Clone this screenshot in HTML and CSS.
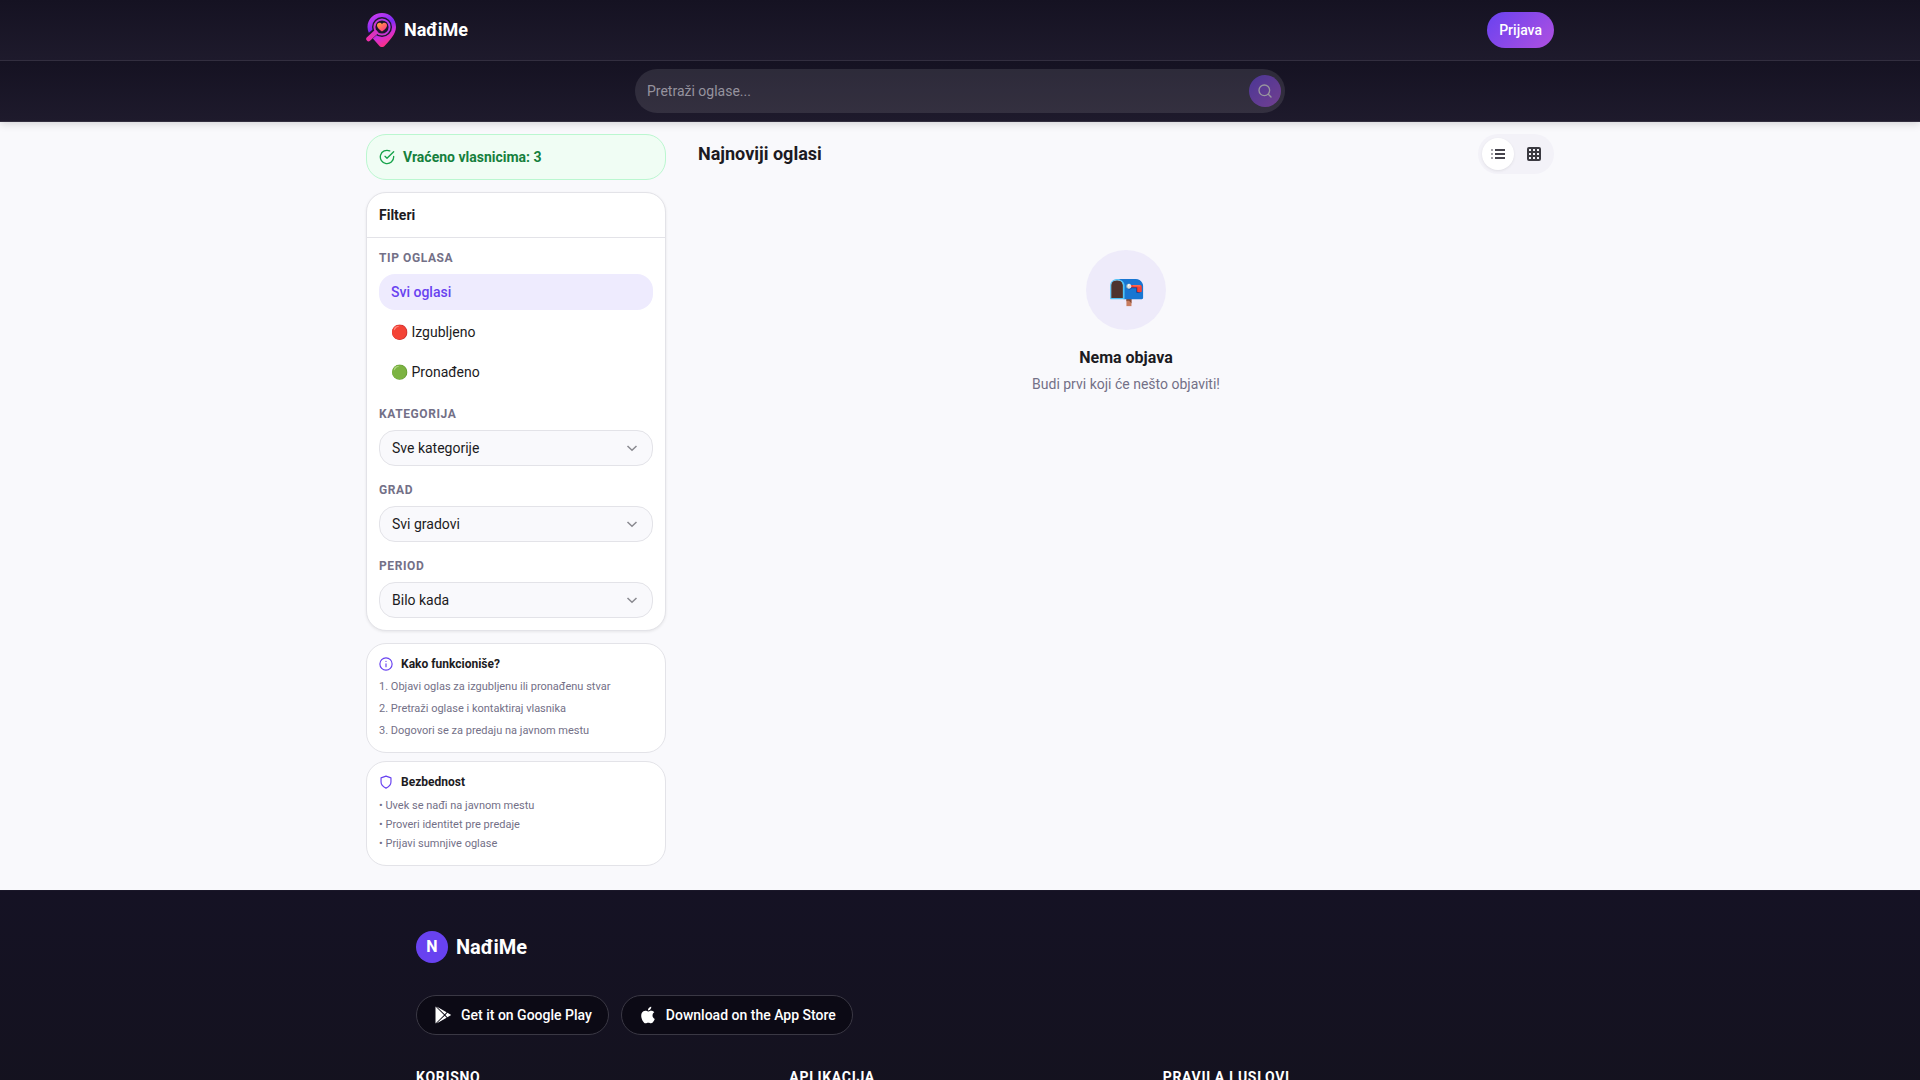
FILE: index.html
```
<!DOCTYPE html>
<html lang="sr-Latn">
<head>
  <meta charset="UTF-8">
  <meta name="viewport" content="width=device-width, initial-scale=1">
  <title>NađiMe</title>
  <link rel="stylesheet" href="styles.css">
</head>
<body>

  <header class="header">
    <div class="topbar">
      <div class="container topbar-inner">
        <a href="#" class="brand">
          <svg class="brand-logo" width="32" height="36" viewBox="0 0 32 36" fill="none">
            <defs>
              <linearGradient id="pin" x1="4" y1="2" x2="20" y2="34" gradientUnits="userSpaceOnUse">
                <stop offset="0" stop-color="#d63cf0"/>
                <stop offset="0.45" stop-color="#7a2bf5"/>
                <stop offset="0.7" stop-color="#d02fd8"/>
                <stop offset="1" stop-color="#ff2f7d"/>
              </linearGradient>
              <linearGradient id="lens" x1="0" y1="28" x2="24" y2="8" gradientUnits="userSpaceOnUse">
                <stop offset="0" stop-color="#f22fa5"/>
                <stop offset="1" stop-color="#a83af5"/>
              </linearGradient>
              <linearGradient id="heart" x1="12" y1="10" x2="19" y2="19" gradientUnits="userSpaceOnUse">
                <stop offset="0" stop-color="#ffb02e"/>
                <stop offset="1" stop-color="#ff2f8d"/>
              </linearGradient>
            </defs>
            <path d="M16 1C8 1 1.500 7 1.500 15c0 4 2 7.500 4.500 10.500l7 8c1.700 2 4.300 2 6 0C24 28 30 22 30 15 30 7 24 1 16 1z" fill="url(#pin)"/>
            <circle cx="16" cy="15" r="10" fill="#1b172b"/>
            <path d="M0 28L9 20" stroke="#1b172b" stroke-width="7"/>
            <path d="M2.500 27L9.500 20.500" stroke="url(#lens)" stroke-width="4.500" stroke-linecap="round"/>
            <circle cx="16" cy="15" r="7.600" stroke="url(#lens)" stroke-width="2"/>
            <path d="M16 19.500c-3-2.200-5-3.800-5-6 0-3 3.600-3.600 5-1.300 1.400-2.300 5-1.700 5 1.300 0 2.200-2 3.800-5 6z" fill="url(#heart)"/>
          </svg>
          <span>NađiMe</span>
        </a>
        <button type="button" class="login-btn">Prijava</button>
      </div>
    </div>
    <div class="searchbar">
      <form class="search" role="search">
        <input type="text" class="search-input" placeholder="Pretraži oglase..." aria-label="Pretraži oglase">
        <button type="submit" class="search-btn" aria-label="Pretraži" disabled>
          <svg width="16" height="16" viewBox="0 0 24 24" fill="none" stroke="currentColor" stroke-width="2">
            <circle cx="11" cy="11" r="8"/>
            <path d="M21 21l-4-4" stroke-linecap="round"/>
          </svg>
        </button>
      </form>
    </div>
  </header>

  <div class="container page">
    <aside class="sidebar">
      <div class="returned">
        <svg width="16" height="16" viewBox="0 0 24 24" fill="none" stroke="currentColor" stroke-width="2" stroke-linecap="round" stroke-linejoin="round">
          <path d="M22 11.080V12a10 10 0 1 1-5.930-9.140"/>
          <path d="M22 4L12 14.010l-3-3"/>
        </svg>
        <span>Vraćeno vlasnicima: 3</span>
      </div>

      <section class="filters">
        <h2 class="filters-title">Filteri</h2>
        <div class="filters-body">
          <div class="filter-group">
            <div class="filter-label">TIP OGLASA</div>
            <div class="type-list">
              <button type="button" class="type-btn active">Svi oglasi</button>
              <button type="button" class="type-btn">🔴 Izgubljeno</button>
              <button type="button" class="type-btn">🟢 Pronađeno</button>
            </div>
          </div>
          <div class="filter-group">
            <label class="filter-label" for="category">KATEGORIJA</label>
            <div class="select-wrap">
              <select id="category"><option>Sve kategorije</option></select>
              <svg class="chevron" width="12" height="12" viewBox="0 0 12 12"><path d="M1.500 4L6 8.200 10.500 4"/></svg>
            </div>
          </div>
          <div class="filter-group">
            <label class="filter-label" for="city">GRAD</label>
            <div class="select-wrap">
              <select id="city"><option>Svi gradovi</option></select>
              <svg class="chevron" width="12" height="12" viewBox="0 0 12 12"><path d="M1.500 4L6 8.200 10.500 4"/></svg>
            </div>
          </div>
          <div class="filter-group">
            <label class="filter-label" for="period">PERIOD</label>
            <div class="select-wrap">
              <select id="period"><option>Bilo kada</option></select>
              <svg class="chevron" width="12" height="12" viewBox="0 0 12 12"><path d="M1.500 4L6 8.200 10.500 4"/></svg>
            </div>
          </div>
        </div>
      </section>

      <div class="info-cards">
        <section class="info-card">
          <h3 class="info-title">
            <svg width="14" height="14" viewBox="0 0 24 24" fill="none" stroke="currentColor" stroke-width="2" stroke-linecap="round">
              <circle cx="12" cy="12" r="10.500"/>
              <path d="M12 16.500v-5M12 7.500v.01"/>
            </svg>
            Kako funkcioniše?
          </h3>
          <div class="info-lines steps">
            <div>1. Objavi oglas za izgubljenu ili pronađenu stvar</div>
            <div>2. Pretraži oglase i kontaktiraj vlasnika</div>
            <div>3. Dogovori se za predaju na javnom mestu</div>
          </div>
        </section>
        <section class="info-card">
          <h3 class="info-title">
            <svg width="14" height="14" viewBox="0 0 24 24" fill="none" stroke="currentColor" stroke-width="2" stroke-linejoin="round">
              <path d="M12 22.500s8.500-4 8.500-10.500V5L12 2 3.500 5v7c0 6.500 8.500 10.500 8.500 10.500z"/>
            </svg>
            Bezbednost
          </h3>
          <div class="info-lines">
            <div>• Uvek se nađi na javnom mestu</div>
            <div>• Proveri identitet pre predaje</div>
            <div>• Prijavi sumnjive oglase</div>
          </div>
        </section>
      </div>
    </aside>

    <main class="content">
      <div class="content-head">
        <h1 class="content-title">Najnoviji oglasi</h1>
        <div class="view-toggle">
          <button type="button" class="view-btn active" aria-label="Lista">
            <svg width="16" height="16" viewBox="0 0 16 16">
              <path d="M5 4h10M5 8h10M5 12h10" stroke="#46444d" stroke-width="2"/>
              <path d="M1 4h2M1 8h2M1 12h2" stroke="#a5a4aa" stroke-width="2"/>
            </svg>
          </button>
          <button type="button" class="view-btn" aria-label="Mreža">
            <svg width="16" height="16" viewBox="0 0 16 16" fill="none" stroke="#3b3a41" stroke-width="2">
              <rect x="2" y="2" width="12" height="12" rx="1"/>
              <path d="M6 2v12M10 2v12M2 6h12M2 10h12"/>
            </svg>
          </button>
        </div>
      </div>
      <div class="empty">
        <div class="empty-icon">📭</div>
        <h2 class="empty-title">Nema objava</h2>
        <p class="empty-text">Budi prvi koji će nešto objaviti!</p>
      </div>
    </main>
  </div>

  <footer class="footer">
    <div class="footer-inner">
      <div class="footer-brand">
        <span class="footer-mark">N</span>
        <span class="footer-name">NađiMe</span>
      </div>
      <div class="stores">
        <a href="#" class="store">
          <svg width="20" height="20" viewBox="0 0 20 20" fill="#fff">
            <path d="M2.500 1.500v17L11 10z"/>
            <path d="M3.500 1.500L11.700 9.300 13.600 7.200zM3.500 18.500l8.200-7.800 1.900 2.100zM12.400 10l2-2.200 3.800 2.200-3.800 2.200z"/>
          </svg>
          Get it on Google Play
        </a>
        <a href="#" class="store">
          <svg width="20" height="20" viewBox="0 0 24 24" fill="#fff">
            <path d="M18.710 19.500c-.83 1.240-1.710 2.450-3.050 2.470-1.340.03-1.770-.79-3.290-.79-1.530 0-2 .77-3.270.82-1.310.05-2.300-1.320-3.140-2.530C4.250 17 2.940 12.450 4.700 9.390c.87-1.520 2.430-2.480 4.120-2.510 1.280-.02 2.500.87 3.290.87.78 0 2.260-1.070 3.810-.91.65.03 2.470.26 3.640 1.980-.09.06-2.170 1.280-2.150 3.810.03 3.020 2.650 4.030 2.680 4.040-.03.07-.42 1.440-1.380 2.830M13 3.500c.73-.83 1.940-1.460 2.940-1.500.13 1.170-.34 2.350-1.040 3.190-.69.85-1.830 1.510-2.950 1.420-.15-1.150.41-2.350 1.050-3.110z"/>
          </svg>
          Download on the App Store
        </a>
      </div>
      <div class="footer-cols">
        <h4>KORISNO</h4>
        <h4>APLIKACIJA</h4>
        <h4>PRAVILA I USLOVI</h4>
      </div>
    </div>
  </footer>

</body>
</html>
```
FILE: styles.css
```
* {
  box-sizing: border-box;
}

body {
  margin: 0;
  font-family: Roboto, "Liberation Sans", sans-serif;
  font-size: 14px;
  line-height: 20px;
  color: #1c1b22;
  background: #f9f9fc;
}

h1, h2, h3, h4, p {
  margin: 0;
}

button, input, select {
  font: inherit;
  color: inherit;
}

button {
  border: none;
  padding: 0;
  cursor: pointer;
}

a {
  color: inherit;
  text-decoration: none;
}

.container {
  width: 100%;
  max-width: 1220px;
  margin: 0 auto;
  padding: 0 16px;
}

/* header */
.header {
  position: relative;
  box-shadow: 0 2px 8px rgba(0, 0, 0, 0.15);
}

.topbar,
.searchbar {
  background: linear-gradient(180deg, #151222, #1e1a2c);
  border-bottom: 1px solid #322e3f;
}

.topbar-inner {
  display: flex;
  align-items: center;
  justify-content: space-between;
  height: 60px;
}

.brand {
  display: flex;
  align-items: center;
  gap: 6px;
  font-size: 18px;
  font-weight: 700;
  color: #fff;
}

.login-btn {
  height: 36px;
  padding: 0 12px;
  border-radius: 18px;
  font-weight: 500;
  color: #fff;
  background: linear-gradient(135deg, #6842f0, #b050e0);
}

.searchbar {
  padding: 8px 16px;
}

.search {
  display: flex;
  align-items: center;
  max-width: 650px;
  height: 44px;
  margin: 0 auto;
  padding: 0 4px 0 12px;
  border-radius: 22px;
  background: rgba(255, 255, 255, 0.1);
}

.search-input {
  flex: 1;
  min-width: 0;
  padding: 0;
  border: none;
  outline: none;
  color: #fff;
  background: none;
}

.search-input::placeholder {
  color: #96939e;
}

.search-btn {
  display: flex;
  align-items: center;
  justify-content: center;
  width: 32px;
  height: 32px;
  border-radius: 50%;
  color: #fff;
  background: linear-gradient(135deg, #6842f0, #b050e0);
  opacity: 0.5;
}

/* page */
.page {
  display: flex;
  gap: 32px;
  padding-top: 12px;
  padding-bottom: 24px;
}

.sidebar {
  display: flex;
  flex-direction: column;
  flex: 0 0 300px;
  gap: 12px;
}

.returned {
  display: flex;
  align-items: center;
  gap: 8px;
  padding: 12px;
  border: 1px solid #bbf7d0;
  border-radius: 20px;
  font-weight: 700;
  color: #15803d;
  background: #f0fdf4;
}

.returned svg {
  color: #16a34a;
}

.filters {
  border: 1px solid #e3e3e8;
  border-radius: 20px;
  background: #fff;
  box-shadow: 0 1px 3px rgba(0, 0, 0, 0.08);
}

.filters-title {
  padding: 12px;
  border-bottom: 1px solid #e3e3e8;
  font-size: 14px;
  font-weight: 700;
}

.filters-body {
  display: flex;
  flex-direction: column;
  gap: 16px;
  padding: 12px;
}

.filter-label {
  display: block;
  margin-bottom: 8px;
  font-size: 12px;
  font-weight: 700;
  line-height: 16px;
  letter-spacing: 0.05em;
  color: #737087;
}

.type-list {
  display: flex;
  flex-direction: column;
  gap: 4px;
}

.type-btn {
  height: 36px;
  padding: 0 12px;
  border-radius: 16px;
  text-align: left;
  background: none;
}

.type-btn.active {
  font-weight: 500;
  color: #6842f0;
  background: #eeebfe;
}

.select-wrap {
  position: relative;
}

.select-wrap select {
  display: block;
  width: 100%;
  height: 36px;
  padding: 0 32px 0 12px;
  border: 1px solid #e3e3e8;
  border-radius: 16px;
  appearance: none;
  background: #f9f9fc;
}

.chevron {
  position: absolute;
  top: 12px;
  right: 15px;
  fill: none;
  stroke: #8a8a90;
  stroke-width: 1.5;
  pointer-events: none;
}

.info-cards {
  display: flex;
  flex-direction: column;
  gap: 8px;
}

.info-card {
  padding: 12px;
  border: 1px solid #e3e3e8;
  border-radius: 20px;
  background: #fff;
}

.info-title {
  display: flex;
  align-items: center;
  gap: 8px;
  margin-bottom: 6px;
  font-size: 12px;
  font-weight: 700;
  line-height: 16px;
}

.info-title svg {
  color: #6842f0;
}

.info-lines {
  font-size: 11px;
  line-height: 19px;
  color: #737087;
}

.steps {
  display: flex;
  flex-direction: column;
  gap: 4px;
  line-height: 18px;
}

/* content */
.content {
  flex: 1;
  min-width: 0;
}

.content-head {
  display: flex;
  align-items: center;
  justify-content: space-between;
}

.content-title {
  font-size: 18px;
  font-weight: 700;
}

.view-toggle {
  display: flex;
  gap: 4px;
  padding: 4px;
  border-radius: 20px;
  background: #f3f2f8;
}

.view-btn {
  display: flex;
  align-items: center;
  justify-content: center;
  width: 32px;
  height: 32px;
  border-radius: 50%;
  background: none;
}

.view-btn.active {
  background: #fff;
  box-shadow: 0 1px 3px rgba(0, 0, 0, 0.08);
}

.empty {
  display: flex;
  flex-direction: column;
  align-items: center;
  margin-top: 12px;
  padding: 64px 16px;
  text-align: center;
}

.empty-icon {
  display: flex;
  align-items: center;
  justify-content: center;
  width: 80px;
  height: 80px;
  margin-bottom: 16px;
  border-radius: 50%;
  font-size: 30px;
  background: #eeebfa;
}

.empty-title {
  margin-bottom: 4px;
  font-size: 16px;
  font-weight: 700;
  line-height: 24px;
}

.empty-text {
  color: #737087;
}

/* footer */
.footer {
  border-top: 1px solid #1b182a;
  color: #fff;
  background: linear-gradient(180deg, #151224, #14121e);
}

.footer-inner {
  max-width: 1120px;
  margin: 0 auto;
  padding: 40px 16px;
}

.footer-brand {
  display: flex;
  align-items: center;
  gap: 8px;
  margin-bottom: 32px;
}

.footer-mark {
  display: flex;
  align-items: center;
  justify-content: center;
  width: 32px;
  height: 32px;
  border-radius: 50%;
  font-size: 16px;
  font-weight: 700;
  background: #6842f0;
}

.footer-name {
  font-size: 20px;
  font-weight: 700;
}

.stores {
  display: flex;
  gap: 12px;
  margin-bottom: 32px;
}

.store {
  display: flex;
  align-items: center;
  gap: 8px;
  height: 40px;
  padding: 0 16px;
  border: 1px solid #3a3844;
  border-radius: 20px;
  font-weight: 500;
  background: #0c0a15;
}

.footer-cols {
  display: grid;
  grid-template-columns: repeat(3, 1fr);
  gap: 32px;
}

.footer-cols h4 {
  font-size: 14px;
  font-weight: 700;
  letter-spacing: 0.05em;
}
```
